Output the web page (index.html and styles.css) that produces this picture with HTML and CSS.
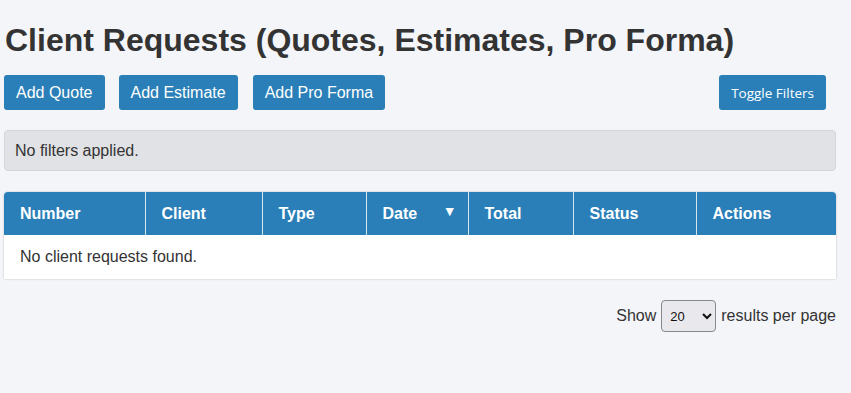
FILE: index.html
```html
<!DOCTYPE html>
<html>
<head>
<meta charset="utf-8">
<link rel="stylesheet" href="styles.css">
</head>
<body>
<div class="page">
  <h1 class="title">Client Requests (Quotes, Estimates, Pro Forma)</h1>
  <div class="toolbar">
    <div class="actions">
      <button class="btn">Add Quote</button>
      <button class="btn">Add Estimate</button>
      <button class="btn">Add Pro Forma</button>
    </div>
    <button class="btn btn-toggle">Toggle Filters</button>
  </div>
  <div class="filters">No filters applied.</div>
  <div class="table-wrap">
    <table class="grid">
      <colgroup>
        <col class="c1"><col class="c2"><col class="c3"><col class="c4"><col class="c5"><col class="c6"><col class="c7">
      </colgroup>
      <thead>
        <tr>
          <th>Number</th>
          <th>Client</th>
          <th>Type</th>
          <th class="sorted">Date <span class="arrow">▼</span></th>
          <th>Total</th>
          <th>Status</th>
          <th>Actions</th>
        </tr>
      </thead>
      <tbody>
        <tr><td colspan="7">No client requests found.</td></tr>
      </tbody>
    </table>
  </div>
  <div class="pager">
    <span>Show</span>
    <select class="per-page"><option>20</option><option>50</option><option>100</option></select>
    <span>results per page</span>
  </div>
</div>
</body>
</html>
```
FILE: styles.css
```css
html, body {
  margin: 0;
  padding: 0;
  background: #f4f5f9;
  font-family: "Liberation Sans", Arial, sans-serif;
  color: #333;
}
.page {
  width: 832px;
  padding: 0 0 0 4px;
}
.title {
  margin: 0;
  padding-top: 20px;
  font-size: 32px;
  line-height: 40px;
  font-weight: bold;
  color: #333;
  padding-left: 1px;
}
.toolbar {
  margin-top: 15px;
  display: flex;
  justify-content: space-between;
  align-items: center;
}
.actions {
  display: flex;
  gap: 14px;
}
.actions .btn:last-child {
  margin-left: 1px;
}
.btn {
  height: 35px;
  background: #2a7fb8;
  color: #fff;
  border: none;
  border-radius: 3px;
  padding: 0 12px;
  font-family: "Liberation Sans", Arial, sans-serif;
  font-size: 16px;
}
.btn-toggle {
  margin-right: 10px;
  font-family: "Open Sans", "Noto Sans", sans-serif;
  font-size: 13.5px;
  padding: 0 12px;
}
.filters {
  margin-top: 20px;
  height: 39px;
  line-height: 39px;
  background: #e1e2e5;
  border: 1px solid #d4d5d8;
  border-radius: 4px;
  padding-left: 10px;
  font-size: 16px;
  color: #333;
}
.table-wrap {
  margin-top: 21px;
  background: #fff;
  border-radius: 4px 4px 0 0;
  box-shadow: 0 0 2px rgba(0,0,0,0.25);
  overflow: hidden;
}
.grid {
  width: 832px;
  border-collapse: collapse;
  table-layout: fixed;
}
.c1 { width: 141px; }
.c2 { width: 117px; }
.c3 { width: 104px; }
.c4 { width: 102px; }
.c5 { width: 105px; }
.c6 { width: 123px; }
.c7 { width: 140px; }
.grid th {
  background: #2a7fb8;
  color: #fff;
  height: 43px;
  padding: 0 0 0 16px;
  text-align: left;
  font-size: 16px;
  font-weight: bold;
  border-left: 1px solid #d6e4ee;
}
.grid th:first-child {
  border-left: none;
}
.grid th.sorted {
  position: relative;
}
.arrow {
  position: absolute;
  right: 11px;
  top: 11px;
  font-size: 14px;
}
.grid td {
  height: 44px;
  padding: 0 0 0 16px;
  font-size: 16px;
  color: #333;
}
.pager {
  margin-top: 21px;
  display: flex;
  justify-content: flex-end;
  align-items: center;
  gap: 5px;
  font-size: 16px;
  color: #333;
}
.per-page {
  width: 55px;
  height: 32px;
  font-size: 13px;
  padding-left: 4px;
  border: 1px solid #888;
  border-radius: 4px;
  background: #e9e9ed;
  color: #111;
}
```
